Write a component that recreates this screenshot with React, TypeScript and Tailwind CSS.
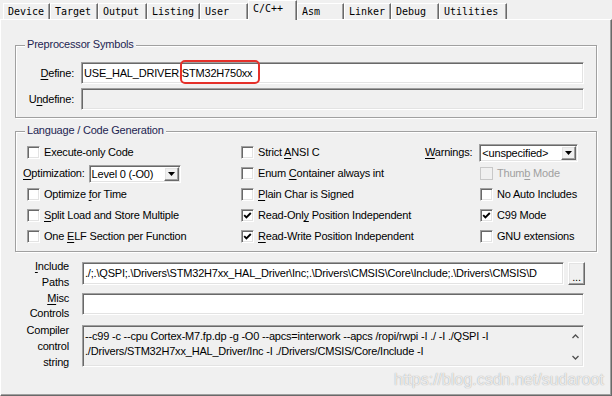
import React from 'react';

const sans = "font-['Liberation_Sans',Arial,sans-serif]";
const mono = "font-['DejaVu_Sans_Mono',monospace]";
const sunken =
  'border border-t-[#a0a0a0] border-l-[#a0a0a0] border-r-white border-b-white shadow-[inset_1px_1px_0_#696969,inset_-1px_-1px_0_#e3e3e3]';
const etched = 'border border-[#a0a0a0] shadow-[1px_1px_0_#fff,inset_1px_1px_0_#fff]';
const raised =
  'border border-t-white border-l-white border-r-[#696969] border-b-[#696969] shadow-[inset_-1px_-1px_0_#a0a0a0,inset_1px_1px_0_#e3e3e3]';

const tabs = [
  { name: 'Device', w: 'w-[47px]' },
  { name: 'Target', w: 'w-[48px]' },
  { name: 'Output', w: 'w-[49px]' },
  { name: 'Listing', w: 'w-[53px]' },
  { name: 'User', w: 'w-[48px]' },
  { name: 'C/C++', w: 'w-[49px]', active: true },
  { name: 'Asm', w: 'w-[47px]' },
  { name: 'Linker', w: 'w-[47px]' },
  { name: 'Debug', w: 'w-[48px]' },
  { name: 'Utilities', w: 'w-[68px]' },
];

const U = ({ children }: { children: React.ReactNode }) => (
  <span className="underline decoration-1 underline-offset-[2px]">{children}</span>
);

function Box({ checked, disabled }: { checked?: boolean; disabled?: boolean }) {
  return (
    <span
      className={`relative block w-[13px] h-[13px] shrink-0 ${
        disabled
          ? 'border border-[#c8c8c8] bg-[#f0f0f0]'
          : `${sunken} bg-white`
      }`}
    >
      {checked && (
        <svg className="absolute left-[1px] top-[1px]" width="9" height="9" viewBox="0 0 9 9">
          <path d="M1.2 4.2 L3.4 6.4 L7.8 2" stroke="#000" strokeWidth="1.9" fill="none" />
        </svg>
      )}
    </span>
  );
}

function Check({
  label,
  checked,
  disabled,
  className = '',
}: {
  label: React.ReactNode;
  checked?: boolean;
  disabled?: boolean;
  className?: string;
}) {
  return (
    <div className={`flex items-center gap-[4px] ${className}`}>
      <Box checked={checked} disabled={disabled} />
      <span className={`leading-[13px] whitespace-nowrap ${disabled ? 'text-[#a0a0a0]' : ''}`}>{label}</span>
    </div>
  );
}

function Combo({ text, w }: { text: string; w: string }) {
  return (
    <div className={`${w} h-[18px] ${sunken} bg-white flex items-center`}>
      <span className="flex-1 pl-[2px] leading-[14px] whitespace-nowrap overflow-hidden">{text}</span>
      <span className={`w-[15px] h-[14px] mr-[1px] bg-[#f0f0f0] ${raised} flex items-center justify-center`}>
        <svg width="7" height="4" viewBox="0 0 7 4">
          <path d="M0 0h7L3.5 4z" fill="#000" />
        </svg>
      </span>
    </div>
  );
}

function Group({ title, className, children }: { title: string; className: string; children: React.ReactNode }) {
  return (
    <div className={`relative ${etched} ${className}`}>
      <span className="absolute -top-[8px] left-[9px] px-[2px] bg-[#f0f0f0] leading-[13px] text-[#1d2552] whitespace-nowrap">
        {title}
      </span>
      {children}
    </div>
  );
}

export default function App() {
  return (
    <div
      className={`relative w-[612px] h-[396px] overflow-hidden bg-[#f0f0f0] flex flex-col text-[11px] tracking-[-0.2px] text-black ${sans}`}
    >
      {/* tab strip */}
      <div className={`flex items-start h-[19px] pl-[3px] shrink-0 tracking-normal text-[10px] ${mono}`}>
        {tabs.map((t) =>
          t.active ? (
            <div
              key={t.name}
              className={`relative z-10 ${t.w} h-[20px] bg-[#f0f0f0] border-t border-l border-r border-t-white border-l-white border-r-[#696969] shadow-[inset_-1px_0_0_#a0a0a0] pl-[4px] leading-[15px]`}
            >
              {t.name}
            </div>
          ) : (
            <div
              key={t.name}
              className={`mt-[3px] ${t.w} h-[16px] border-t border-l border-r border-t-white border-l-white border-r-[#696969] shadow-[inset_-1px_0_0_#a0a0a0] pl-[4px] leading-[15px]`}
            >
              {t.name}
            </div>
          )
        )}
      </div>

      {/* page */}
      <div className="flex-1 flex flex-col border-t border-l border-r border-b border-t-white border-l-white border-r-[#696969] border-b-[#696969] shadow-[inset_-1px_-1px_0_#a0a0a0] px-[14px]">
        <Group title="Preprocessor Symbols" className="mt-[25px] pt-[16px] pb-[7px] pr-[12px]">
          <div className="flex flex-col gap-[4px]">
            <div className="flex items-center gap-[7px]">
              <span className="w-[58px] text-right">
                <U>D</U>efine:
              </span>
              <div className={`relative flex-1 h-[22px] ${sunken} bg-white flex items-center pl-[2px]`}>
                <span className="whitespace-nowrap">USE_HAL_DRIVER,STM32H750xx</span>
                <span className="absolute left-[98px] -top-[3px] w-[80px] h-[24px] border-2 border-[#e5302a] rounded-[5px]" />
              </div>
            </div>
            <div className="flex items-center gap-[7px]">
              <span className="w-[58px] text-right">
                U<U>n</U>define:
              </span>
              <div className={`flex-1 h-[22px] ${sunken} bg-[#f0f0f0]`} />
            </div>
          </div>
        </Group>

        <Group title="Language / Code Generation" className="mt-[13px] pt-[10px] pb-[4px] pl-[7px]">
          <div className="grid grid-cols-[218px_184px_1fr] auto-rows-[21px] items-center">
            <Check className="ml-[4px]" label="Execute-only Code" />
            <Check label={<>Strict <U>A</U>NSI C</>} />
            <div className="flex items-center gap-[7px]">
              <span>
                <U>W</U>arnings:
              </span>
              <Combo text="<unspecified>" w="w-[99px]" />
            </div>

            <div className="flex items-center gap-[4px]">
              <span>
                <U>O</U>ptimization:
              </span>
              <Combo text="Level 0 (-O0)" w="w-[92px]" />
            </div>
            <Check label={<>Enum <U>C</U>ontainer always int</>} />
            <Check className="ml-[55px]" disabled label={<>Thum<U>b</U> Mode</>} />

            <Check className="ml-[4px]" label={<>Optimize <U>f</U>or Time</>} />
            <Check label={<><U>P</U>lain Char is Signed</>} />
            <Check className="ml-[55px]" label="No Auto Includes" />

            <Check className="ml-[4px]" label={<><U>S</U>plit Load and Store Multiple</>} />
            <Check checked label={<>Read-Onl<U>y</U> Position Independent</>} />
            <Check className="ml-[55px]" checked label="C99 Mode" />

            <Check className="ml-[4px]" label={<>One <U>E</U>LF Section per Function</>} />
            <Check checked label={<><U>R</U>ead-Write Position Independent</>} />
            <Check className="ml-[55px]" label="GNU extensions" />
          </div>
        </Group>

        {/* include / misc / compiler string */}
        <div className="flex flex-col pr-[12px]">
          <div className="mt-[10px] h-[23px] flex items-center gap-[13px]">
            <div className="w-[54px] text-right leading-[16px]">
              <U>I</U>nclude
              <br />
              Paths
            </div>
            <div className="flex-1 min-w-0 h-[23px] flex gap-[4px]">
              <div className={`flex-1 min-w-0 h-[23px] ${sunken} bg-white flex items-center pl-[2px] overflow-hidden`}>
                <span className="whitespace-nowrap">
                  ./;.\QSPI;.\Drivers\STM32H7xx_HAL_Driver\Inc;.\Drivers\CMSIS\Core\Include;.\Drivers\CMSIS\D
                </span>
              </div>
              <div className={`w-[17px] h-[23px] bg-[#f0f0f0] ${raised} flex items-end justify-center pb-[3px] leading-[8px]`}>
                ...
              </div>
            </div>
          </div>

          <div className="mt-[8px] h-[22px] flex items-center gap-[13px] pr-[1px]">
            <div className="w-[54px] text-right leading-[15px] pt-[3px]">
              <U>M</U>isc
              <br />
              Controls
            </div>
            <div className={`flex-1 h-[22px] ${sunken} bg-white`} />
          </div>

          <div className="mt-[10px] h-[42px] flex items-center gap-[13px] pr-[1px]">
            <div className="w-[54px] text-right leading-[16px]">
              Compiler
              <br />
              control
              <br />
              string
            </div>
            <div className={`flex-1 h-[42px] ${sunken} bg-[#f0f0f0] flex`}>
              <div className="flex-1 pl-[2px] pt-[3px] leading-[15px] whitespace-nowrap overflow-hidden">
                --c99 -c --cpu Cortex-M7.fp.dp -g -O0 --apcs=interwork --apcs /ropi/rwpi -I ./ -I ./QSPI -I
                <br />
                ./Drivers/STM32H7xx_HAL_Driver/Inc -I ./Drivers/CMSIS/Core/Include -I
              </div>
              <div className="w-[16px] flex flex-col items-center justify-between pt-[8px] pb-[6px]">
                <svg width="7" height="5" viewBox="0 0 7 5">
                  <path d="M0.5 4 L3.5 1 L6.5 4" stroke="#505050" strokeWidth="1.3" fill="none" />
                </svg>
                <svg width="7" height="5" viewBox="0 0 7 5">
                  <path d="M0.5 1 L3.5 4 L6.5 1" stroke="#505050" strokeWidth="1.3" fill="none" />
                </svg>
              </div>
            </div>
          </div>
        </div>
      </div>

      <span className="absolute left-[394px] top-[371px] text-[16px] tracking-normal leading-[18px] text-white/80 [text-shadow:0_0_1px_#8a8a8a] whitespace-nowrap">
        https://blog.csdn.net/sudaroot
      </span>
    </div>
  );
}
